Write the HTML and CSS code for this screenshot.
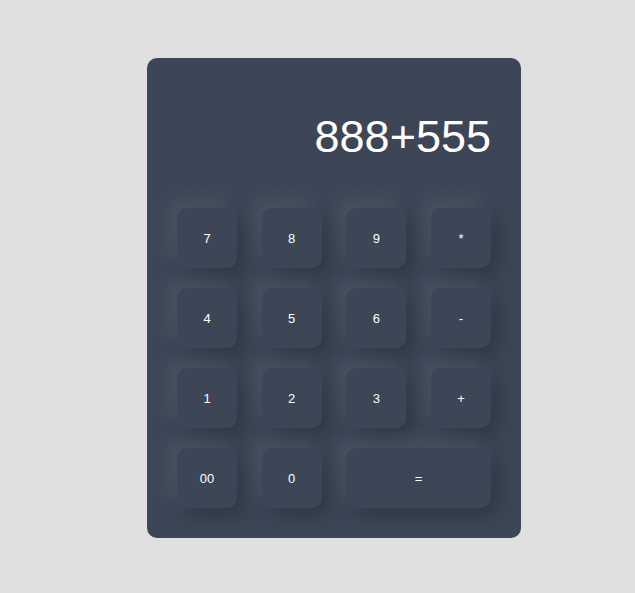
FILE: index.html
```html
<!DOCTYPE html>
<html>
<head>
<meta charset="utf-8">
<link rel="stylesheet" href="styles.css">
</head>
<body>
<div class="calc">
  <div class="display"><span class="value">888+555</span></div>
  <div class="keys">
    <button class="key">7</button>
    <button class="key">8</button>
    <button class="key">9</button>
    <button class="key">*</button>
    <button class="key">4</button>
    <button class="key">5</button>
    <button class="key">6</button>
    <button class="key">-</button>
    <button class="key">1</button>
    <button class="key">2</button>
    <button class="key">3</button>
    <button class="key">+</button>
    <button class="key">00</button>
    <button class="key">0</button>
    <button class="key wide">=</button>
  </div>
</div>
</body>
</html>
```
FILE: styles.css
```css
html, body {
  margin: 0;
  padding: 0;
}
body {
  background: #e1dfe0;
  font-family: "Liberation Sans", Arial, sans-serif;
  padding-top: 58px;
  padding-left: 147px;
  height: 593px;
  box-sizing: border-box;
}
.calc {
  width: 374px;
  height: 480px;
  box-sizing: border-box;
  background: #3c4656;
  border-radius: 10px;
  padding: 30px;
}
.display {
  height: 120px;
  box-sizing: border-box;
  display: flex;
  justify-content: flex-end;
  align-items: flex-end;
  padding-bottom: 46px;
}
.value {
  color: #ffffff;
  font-size: 45px;
  line-height: 50px;
}
.keys {
  display: grid;
  grid-template-columns: repeat(4, 60px);
  grid-auto-rows: 60px;
  justify-content: space-between;
  row-gap: 20px;
  width: 314px;
}
.key {
  border: none;
  margin: 0;
  padding: 0;
  background: #3c4656;
  color: #ffffff;
  font-family: "Liberation Sans", Arial, sans-serif;
  font-size: 13px;
  border-radius: 10px;
  box-shadow: -8px -8px 20px rgba(255, 255, 255, 0.08), 8px 8px 20px rgba(0, 0, 0, 0.22);
}
.wide {
  grid-column: span 2;
}
```
